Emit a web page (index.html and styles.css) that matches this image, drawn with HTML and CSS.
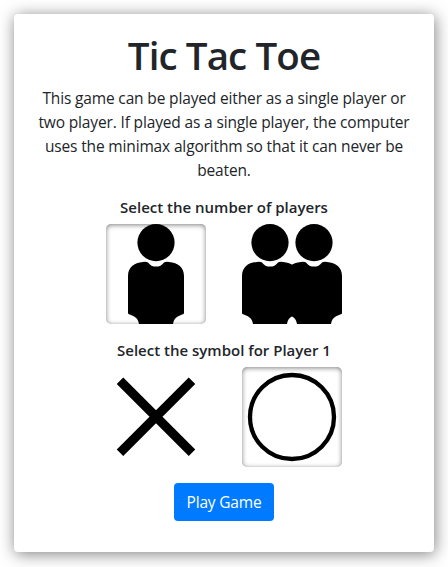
FILE: index.html
```html
<!DOCTYPE html>
<html lang="en">
<head>
<meta charset="utf-8">
<title>Tic Tac Toe</title>
<link rel="stylesheet" href="styles.css">
</head>
<body>
<main class="card">
  <h1 class="title">Tic Tac Toe</h1>
  <p class="intro">This game can be played either as a single player or<br>two player. If played as a single player, the computer<br>uses the minimax algorithm so that it can never be<br>beaten.</p>
  <h2 class="label label-players">Select the number of players</h2>
  <div class="choices">
    <div class="choice selected">
      <svg viewBox="0 0 100 100" width="100" height="100">
        <defs>
          <g id="person">
            <circle cx="50" cy="18.6" r="18.6"/>
            <path d="M37 38Q40 37.6 42 38.4Q45 42.6 50 42.6Q55 42.6 58 38.4Q60 37.6 63 38C72 38.5 78 43.5 78 52V89.5C76 91.5 68 91.5 67 100H33C32 91.5 24 91.5 22 89.5V52C22 43.5 28 38.5 37 38Z"/>
          </g>
        </defs>
        <use href="#person"/>
      </svg>
    </div>
    <div class="choice">
      <svg viewBox="0 0 100 100" width="100" height="100">
        <use href="#person" x="-22"/>
        <use href="#person" x="22"/>
      </svg>
    </div>
  </div>
  <h2 class="label label-symbol">Select the symbol for Player 1</h2>
  <div class="choices">
    <div class="choice">
      <svg viewBox="0 0 100 100" width="100" height="100">
        <path d="M14 13.8L86 85.8M86 13.8L14 85.8" fill="none" stroke="#000" stroke-width="9.2"/>
      </svg>
    </div>
    <div class="choice selected">
      <svg viewBox="0 0 100 100" width="100" height="100">
        <circle cx="50" cy="50" r="42" fill="none" stroke="#000" stroke-width="4.3"/>
      </svg>
    </div>
  </div>
  <button class="play" type="button">Play Game</button>
</main>
</body>
</html>
```
FILE: styles.css
```css
* { box-sizing: border-box; }
body {
  min-height: 567px;
  margin: 0;
  padding: 14px;
  background: #fff;
  color: #212529;
  font-family: "Open Sans", "Noto Sans", sans-serif;
  font-size: 16px;
  line-height: 24px;
}
.card {
  display: flex;
  flex-direction: column;
  align-items: center;
  width: 420px;
  height: 538px;
  padding-top: 17px;
  border-radius: 4px;
  background: #fff;
  box-shadow: 1px 2px 16px rgba(0, 0, 0, 0.5);
  text-align: center;
}
.title {
  margin: 0 0 7px;
  font-size: 38.5px;
  font-weight: 600;
  letter-spacing: -0.9px;
  line-height: 48px;
}
.intro {
  margin: 0;
  font-size: 15.5px;
  letter-spacing: -0.15px;
  white-space: nowrap;
}
.label {
  margin: 0 0 5px;
  font-size: 15px;
  font-weight: 600;
  line-height: 24px;
  white-space: nowrap;
}
.label-players { margin-top: 13px; }
.label-symbol { margin-top: 14px; }
.choices {
  display: flex;
  gap: 36px;
}
.choice {
  width: 100px;
  height: 100px;
  border-radius: 5px;
}
.choice svg { display: block; }
.selected { box-shadow: inset 0 1px 5px rgba(0, 0, 0, 0.5); }
.play {
  width: 100px;
  height: 38px;
  margin-top: 16px;
  padding: 0;
  border: 0;
  border-radius: 4px;
  background: #007bff;
  color: #fff;
  font: 15.5px/38px "Open Sans", "Noto Sans", sans-serif;
  letter-spacing: -0.2px;
}
```
